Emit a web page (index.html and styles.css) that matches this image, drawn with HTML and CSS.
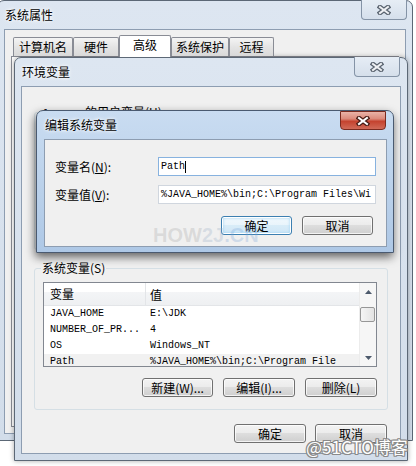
FILE: index.html
```html
<!DOCTYPE html>
<html lang="zh">
<head>
<meta charset="utf-8">
<title>编辑系统变量</title>
<link rel="stylesheet" href="styles.css">
</head>
<body>
  <!-- 系统属性 -->
  <div class="win win-sys">
    <div class="titlebar">
      <span class="title">系统属性</span>
      <span class="close close-sys">
        <svg width="14" height="10" viewBox="0 0 14 10"><path d="M3 2 L11 8 M11 2 L3 8" class="x-out"/><path d="M3 2 L11 8 M11 2 L3 8" class="x-in"/></svg>
      </span>
    </div>
    <div class="client">
      <div class="tabs">
        <div class="tab t1">计算机名</div>
        <div class="tab t2">硬件</div>
        <div class="tab t3 sel">高级</div>
        <div class="tab t4">系统保护</div>
        <div class="tab t5">远程</div>
      </div>
      <div class="tabpage"></div>
    </div>
  </div>

  <!-- 环境变量 -->
  <div class="win win-env">
    <div class="titlebar">
      <span class="title">环境变量</span>
      <span class="close">
        <svg width="14" height="10" viewBox="0 0 14 10"><path d="M3 2 L11 8 M11 2 L3 8" class="x-out"/><path d="M3 2 L11 8 M11 2 L3 8" class="x-in"/></svg>
      </span>
    </div>
    <div class="client env-client">
      <div class="group g-user">
        <span class="glabel"><span class="mono">lenovo </span>的用户变量(U)</span>
      </div>
      <div class="group g-sys">
        <span class="glabel">系统变量(S)</span>
        <div class="list">
          <div class="table">
            <div class="thead">
              <div class="c1">变量</div>
              <div class="c2">值</div>
            </div>
            <div class="row"><div class="c1">JAVA_HOME</div><div class="c2">E:\JDK</div></div>
            <div class="row"><div class="c1">NUMBER_OF_PR...</div><div class="c2">4</div></div>
            <div class="row"><div class="c1">OS</div><div class="c2">Windows_NT</div></div>
            <div class="row hl"><div class="c1">Path</div><div class="c2">%JAVA_HOME%\bin;C:\Program File</div></div>
          </div>
          <div class="vscroll">
            <div class="arrow"><svg width="7" height="4" viewBox="0 0 7 4"><polygon points="0,4 7,4 3.5,0" fill="#4d5a6c"/></svg></div>
            <div class="thumb"></div>
            <div class="track"></div>
            <div class="arrow"><svg width="7" height="4" viewBox="0 0 7 4"><polygon points="0,0 7,0 3.5,4" fill="#4d5a6c"/></svg></div>
          </div>
        </div>
        <div class="btnrow">
          <div class="btn b-new">新建(W)...</div>
          <div class="btn b-edit">编辑(I)...</div>
          <div class="btn b-del">删除(L)</div>
        </div>
      </div>
      <div class="btnrow bottom">
        <div class="btn">确定</div>
        <div class="btn">取消</div>
      </div>
    </div>
  </div>

  <!-- 编辑系统变量 -->
  <div class="win win-edit">
    <div class="titlebar">
      <span class="title">编辑系统变量</span>
      <span class="close close-red">
        <svg width="14" height="10" viewBox="0 0 14 10"><path d="M3 2 L11 8 M11 2 L3 8" class="x-out red"/><path d="M3 2 L11 8 M11 2 L3 8" class="x-in white"/></svg>
      </span>
    </div>
    <div class="client edit-client">
      <div class="form">
        <label class="lbl">变量名(<u>N</u>):</label>
        <div class="input focus"><span class="mono">Path</span><span class="caret"></span></div>
        <label class="lbl">变量值(<u>V</u>):</label>
        <div class="input"><span class="mono">%JAVA_HOME%\bin;C:\Program Files\Wi</span></div>
      </div>
      <div class="btnrow edit-btns">
        <div class="btn default">确定</div>
        <div class="btn">取消</div>
      </div>
    </div>
  </div>

  <div class="wm-how2j"><span class="w1">HOW</span><span class="w2">2J</span><span class="w3">.CN</span></div>
  <div class="wm-51cto">@51CTO博客</div>
</body>
</html>
```
FILE: styles.css
```css
* { box-sizing: border-box; }
html, body { margin: 0; padding: 0; }
body {
  width: 416px;
  height: 466px;
  position: relative;
  overflow: hidden;
  background: #ffffff;
  font-family: "Noto Sans CJK SC", "Liberation Sans", sans-serif;
  font-size: 12px;
  color: #000;
}
.mono { font-family: "Liberation Mono", "DejaVu Sans Mono", monospace; font-size: 10px; }

/* windows */
.win {
  position: absolute;
  display: flex;
  flex-direction: column;
  border: 1px solid #5c6876;
  border-radius: 7px 7px 0 0;
  background: linear-gradient(#dde6f1, #d2ddea);
  padding: 0 6px 6px 6px;
}
.win-sys { left: -3px; top: 0; width: 416px; height: 441px; }
.win-env {
  left: 14px; top: 57px; width: 394px; height: 404px;
  box-shadow: 0 0 5px rgba(0,0,0,0.35);
}
.win-edit {
  left: 36px; top: 110px; width: 358px; height: 143px;
  padding: 0 6px 5px 7px;
  background: linear-gradient(#c9dcf1, #b9d0ea 60%, #aec8e6);
  border-color: #4a5a70;
  box-shadow: -1px 4px 10px rgba(0,0,0,0.6);
}

.titlebar {
  height: 28px;
  flex: none;
  display: flex;
  align-items: center;
  padding: 0 1px;
}
.title { text-shadow: 0 0 5px #fff, 0 0 3px #fff; line-height: 16px; }

.close {
  align-self: flex-start;
  margin-left: auto;
  margin-top: -1px;
  width: 46px;
  height: 20px;
  border: 1px solid #8493a6;
  border-top: none;
  border-radius: 0 0 4px 4px;
  background: linear-gradient(#e6edf5, #d5dfeb);
  display: flex;
  align-items: center;
  justify-content: center;
}
.close-sys { margin-right: -2px; }
.close-red {
  height: 19px;
  margin-top: 0;
  border: 1px solid #7a2a1f;
  border-radius: 0 0 4px 4px;
  background: linear-gradient(#eab3a8 0%, #dc8a7b 40%, #c5432f 55%, #d06a58 100%);
}
.x-out { stroke: #59636f; stroke-width: 4.6; stroke-linecap: square; fill: none; }
.x-in { stroke: #eef0f3; stroke-width: 2; stroke-linecap: square; fill: none; }
.x-out.red { stroke: #4a1d16; }
.x-in.white { stroke: #ffffff; }

.client {
  flex: 1;
  min-height: 0;
  border: 1px solid #8d9db1;
  background: #f0f0f0;
  position: relative;
  display: flex;
  flex-direction: column;
}

/* tabs */
.tabs {
  margin-top: 5px;
  padding-left: 8px;
  height: 21px;
  display: flex;
  align-items: flex-end;
  flex: none;
  position: relative;
  z-index: 1;
}
.tab {
  height: 19px;
  border: 1px solid #898c95;
  border-bottom: none;
  border-radius: 2px 2px 0 0;
  background: linear-gradient(#f4f4f4, #e4e4e4 50%, #d9d9d9);
  text-align: center;
  line-height: 18px;
}
.t1 { width: 60px; }
.t2 { width: 46px; }
.t3 { width: 52px; }
.t4 { width: 58px; }
.t5 { width: 45px; }
.tab.sel {
  height: 22px;
  margin-bottom: -1px;
  background: #ffffff;
  line-height: 18px;
}
.tabpage {
  flex: 1;
  margin: 0 6px 6px 6px;
  border: 1px solid #898c95;
  background: #ffffff;
}

/* env window */
.env-client { padding: 0 12px; }
.group {
  position: relative;
  border: 1px solid #d5dfe5;
  border-radius: 3px;
  flex: none;
}
.g-user { margin-top: 25px; height: 138px; }
.g-sys {
  margin-top: 18px;
  height: 142px;
  padding: 13px 10px 0 8px;
  display: flex;
  flex-direction: column;
}
.glabel {
  position: absolute;
  top: -8px;
  left: 6px;
  padding: 0 1px;
  background: #f0f0f0;
  line-height: 14px;
  white-space: nowrap;
}
.g-user .glabel { left: 7px; }

.list {
  height: 85px;
  border: 1px solid #828790;
  background: #fff;
  display: flex;
  overflow: hidden;
  flex: none;
}
.table { flex: 1; min-width: 0; overflow: hidden; }
.thead {
  height: 23px;
  display: flex;
  align-items: center;
  background: linear-gradient(#ffffff 0%, #ffffff 40%, #f4f5f7 40%, #eef0f2 100%);
  border-bottom: 1px solid #e3e5e8;
}
.thead .c1 { border-right: 1px solid #e3e5e8; height: 23px; line-height: 22px; }
.c1 { width: 102px; padding-left: 6px; flex: none; white-space: nowrap; overflow: hidden; }
.c2 { padding-left: 4px; white-space: nowrap; }
.row {
  height: 16px;
  line-height: 16px;
  display: flex;
  font-family: "Liberation Mono", "DejaVu Sans Mono", monospace;
  font-size: 10px;
}
.row.hl { background: #f1f1f1; }

.vscroll {
  width: 17px;
  flex: none;
  display: flex;
  flex-direction: column;
  background: #f6f6f6;
  border-left: 1px solid #ececec;
}
.arrow {
  height: 17px;
  flex: none;
  display: flex;
  align-items: center;
  justify-content: center;
}
.thumb {
  height: 15px;
  margin: 7px 1px 0 0;
  flex: none;
  border: 1px solid #979797;
  border-radius: 2px;
  background: linear-gradient(90deg, #f5f5f5, #e3e3e3);
}
.track { flex: 1; }

.btnrow {
  display: flex;
  justify-content: flex-end;
  gap: 10px;
  flex: none;
}
.g-sys .btnrow { margin-top: 11px; padding-right: 0; }
.bottom { margin-top: 14px; gap: 9px; padding-right: 1px; }

.btn {
  width: 72px;
  height: 19px;
  border: 1px solid #707070;
  border-radius: 3px;
  background: linear-gradient(#f3f3f3 0%, #ebebeb 50%, #dddddd 50%, #cfcfcf 100%);
  box-shadow: inset 0 0 0 1px rgba(255,255,255,0.75);
  text-align: center;
  line-height: 17px;
  white-space: nowrap;
}
.b-new { width: 71px; }

/* edit window */
.edit-client { padding: 17px 0 0 10px; }
.form {
  display: grid;
  grid-template-columns: 103px 218px;
  row-gap: 9px;
  align-items: center;
}
.lbl { line-height: 16px; white-space: nowrap; }
.lbl u { text-decoration: underline; }
.input {
  height: 19px;
  border: 1px solid #d0d6de;
  background: #fff;
  padding-left: 2px;
  line-height: 17px;
  white-space: nowrap;
  overflow: hidden;
  display: flex;
  align-items: center;
}
.input.focus { border-color: #87b2df; }
.caret {
  display: inline-block;
  width: 1px;
  height: 12px;
  background: #000;
}
.edit-btns { margin-top: 12px; padding-right: 13px; gap: 10px; }
.edit-btns .btn { width: 71px; }
.btn.default {
  border-color: #3c7fb1;
  background: linear-gradient(#f3f9fd 0%, #e8f4fb 50%, #d8ecf8 50%, #cfe6f6 100%);
  box-shadow: inset 0 0 0 1px #ffffff, inset 0 0 3px 1px #9fd4f3;
}

/* watermarks */
.wm-how2j {
  position: absolute;
  left: 153px;
  top: 226px;
  font-family: "Liberation Sans", sans-serif;
  font-weight: bold;
  font-size: 20px;
  line-height: 18px;
  pointer-events: none;
}
.wm-how2j .w1 { color: rgba(170,170,170,0.32); }
.wm-how2j .w2 { color: rgba(150,170,195,0.28); }
.wm-how2j .w3 { color: rgba(120,165,215,0.28); }
.wm-51cto {
  position: absolute;
  left: 306px;
  top: 438px;
  font-family: "Noto Sans CJK SC", "Liberation Sans", sans-serif;
  font-size: 17px;
  line-height: 18px;
  color: #ffffff;
  text-shadow: 1px 0 0 #8a8a8a, -1px 0 0 #8a8a8a, 0 1px 0 #8a8a8a, 0 -1px 0 #8a8a8a, 1px 1px 0 #8a8a8a, -1px -1px 0 #8a8a8a, 1px -1px 0 #8a8a8a, -1px 1px 0 #8a8a8a;
}
```
